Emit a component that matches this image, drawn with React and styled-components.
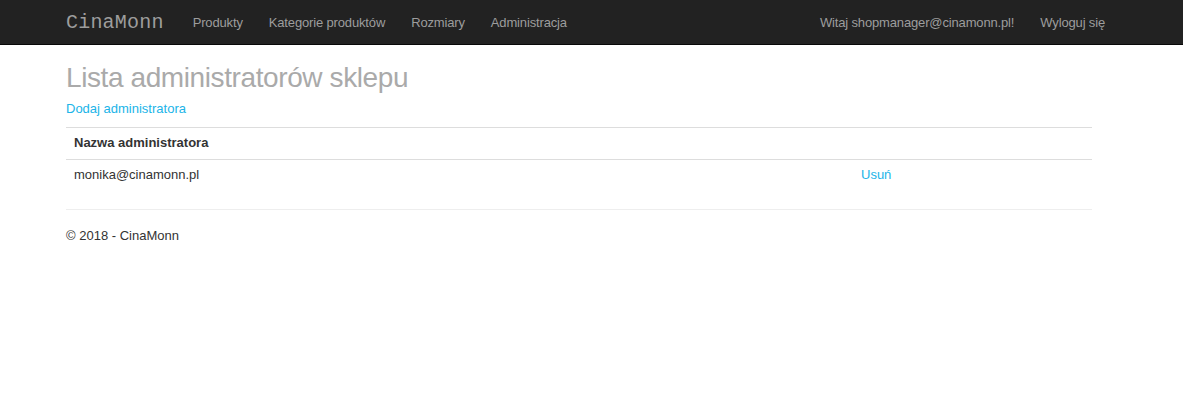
import React from "react";
import styled, { createGlobalStyle } from "styled-components";

const GlobalStyle = createGlobalStyle`
  body {
    margin: 0;
    background: #fff;
    font-family: "Liberation Sans", Arial, sans-serif;
    font-size: 13px;
    color: #333;
  }
`;

const Navbar = styled.nav`
  background: #222;
  border-bottom: 1px solid #080808;
  height: 44px;
`;

const Container = styled.div`
  width: 1026px;
  padding: 0 15px;
  margin-left: 51px;
`;

const NavInner = styled(Container)`
  display: flex;
  align-items: center;
  height: 44px;
`;

const Brand = styled.a`
  font-family: "Liberation Mono", "DejaVu Sans Mono", monospace;
  font-size: 20px;
  color: #9d9d9d;
  text-decoration: none;
  margin-right: 29px;
  letter-spacing: 0.2px;
`;

const NavList = styled.ul`
  display: flex;
  gap: 26px;
  list-style: none;
  margin: 0;
  padding: 0;
  margin-left: ${(props) => (props.right ? "auto" : "0")};
  margin-right: ${(props) => (props.right ? "-13px" : "0")};
`;

const NavLink = styled.a`
  color: #9d9d9d;
  text-decoration: none;
  font-size: 13px;
  letter-spacing: -0.15px;
`;

const Title = styled.h2`
  font-size: 28px;
  font-weight: 400;
  color: #aaa;
  margin: 18px 0 7px;
  line-height: 1.1;
  letter-spacing: -0.4px;
`;

const Link = styled.a`
  color: #20b4e8;
  text-decoration: none;
`;

const Table = styled.table`
  width: 100%;
  border-collapse: collapse;
  margin-top: 11px;
  margin-bottom: 18px;

  th, td {
    text-align: left;
    padding: 7px 8px 8px;
    line-height: 16px;
    vertical-align: top;
    border-top: 1px solid #ddd;
  }

  th {
    font-weight: 700;
    border-bottom: 1px solid #ddd;
  }
`;

const Hr = styled.hr`
  border: 0;
  border-top: 1px solid #eee;
  margin: 0;
`;

const Footer = styled.footer`
  padding-top: 18px;
`;

const App = () => {
  return (
    <>
      <GlobalStyle />
      <Navbar>
        <NavInner>
          <Brand href="#">CinaMonn</Brand>
          <NavList>
            <li><NavLink href="#">Produkty</NavLink></li>
            <li><NavLink href="#">Kategorie produktów</NavLink></li>
            <li><NavLink href="#">Rozmiary</NavLink></li>
            <li><NavLink href="#">Administracja</NavLink></li>
          </NavList>
          <NavList right>
            <li><NavLink href="#">Witaj shopmanager@cinamonn.pl!</NavLink></li>
            <li><NavLink href="#">Wyloguj się</NavLink></li>
          </NavList>
        </NavInner>
      </Navbar>
      <Container>
        <Title>Lista administratorów sklepu</Title>
        <Link href="#">Dodaj administratora</Link>
        <Table>
          <thead>
            <tr>
              <th>Nazwa administratora</th>
              <th style={{ width: 223 }}></th>
            </tr>
          </thead>
          <tbody>
            <tr>
              <td>monika@cinamonn.pl</td>
              <td><Link href="#">Usuń</Link></td>
            </tr>
          </tbody>
        </Table>
        <Hr />
        <Footer>© 2018 - CinaMonn</Footer>
      </Container>
    </>
  );
};

export default App;
